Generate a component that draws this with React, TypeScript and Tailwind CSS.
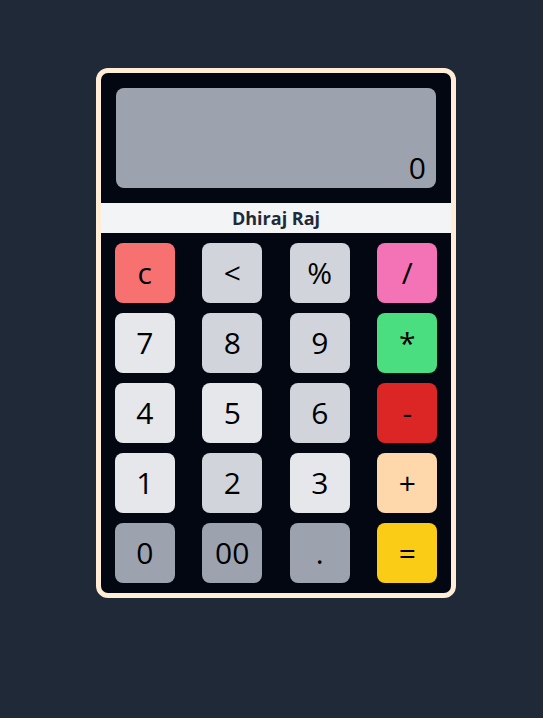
import React, { useState } from "react";

type Key = { label: string; color: string };

const rows: Key[][] = [
  [
    { label: "c", color: "bg-[#f87171]" },
    { label: "<", color: "bg-[#d1d5db]" },
    { label: "%", color: "bg-[#d1d5db]" },
    { label: "/", color: "bg-[#f472b6]" },
  ],
  [
    { label: "7", color: "bg-[#e5e7eb]" },
    { label: "8", color: "bg-[#d1d5db]" },
    { label: "9", color: "bg-[#d1d5db]" },
    { label: "*", color: "bg-[#4ade80]" },
  ],
  [
    { label: "4", color: "bg-[#e5e7eb]" },
    { label: "5", color: "bg-[#e5e7eb]" },
    { label: "6", color: "bg-[#d1d5db]" },
    { label: "-", color: "bg-[#dc2626]" },
  ],
  [
    { label: "1", color: "bg-[#e5e7eb]" },
    { label: "2", color: "bg-[#d1d5db]" },
    { label: "3", color: "bg-[#e5e7eb]" },
    { label: "+", color: "bg-[#fed7aa]" },
  ],
  [
    { label: "0", color: "bg-[#9ca3af]" },
    { label: "00", color: "bg-[#9ca3af]" },
    { label: ".", color: "bg-[#9ca3af]" },
    { label: "=", color: "bg-[#facc15]" },
  ],
];

export default function App() {
  const [value, setValue] = useState("0");

  const press = (k: string) => {
    if (k === "c") return setValue("0");
    if (k === "<") return setValue((v) => (v.length > 1 ? v.slice(0, -1) : "0"));
    if (k === "=") {
      try {
        // eslint-disable-next-line no-new-func
        const r = Function(`return (${value})`)();
        setValue(String(r));
      } catch {
        setValue("Error");
      }
      return;
    }
    setValue((v) => (v === "0" ? k : v + k));
  };

  return (
    <div
      className="min-h-screen bg-[#1f2937] pt-[68px] pl-[96px]"
      style={{ fontFamily: '"Open Sans", "Noto Sans", sans-serif' }}
    >
      <div className="w-[360px] rounded-xl border-[5px] border-[#ffedd5] bg-[#030712] pb-[10px]">
        <div className="p-[15px]">
          <div className="flex h-[100px] items-end justify-end rounded-lg bg-[#9ca3af] px-[10px] pb-[2px] text-3xl text-black">
            {value}
          </div>
        </div>
        <div className="flex h-[30px] items-center justify-center bg-[#f3f4f6] text-lg font-bold text-[#1f2937]">
          Dhiraj Raj
        </div>
        <div className="mt-[10px] flex flex-col gap-[10px]">
          {rows.map((row, i) => (
            <div key={i} className="flex justify-around">
              {row.map((k) => (
                <button
                  key={k.label}
                  onClick={() => press(k.label)}
                  className={`flex h-[60px] w-[60px] items-center justify-center rounded-lg text-3xl text-black ${k.color}`}
                >
                  {k.label}
                </button>
              ))}
            </div>
          ))}
        </div>
      </div>
    </div>
  );
}
